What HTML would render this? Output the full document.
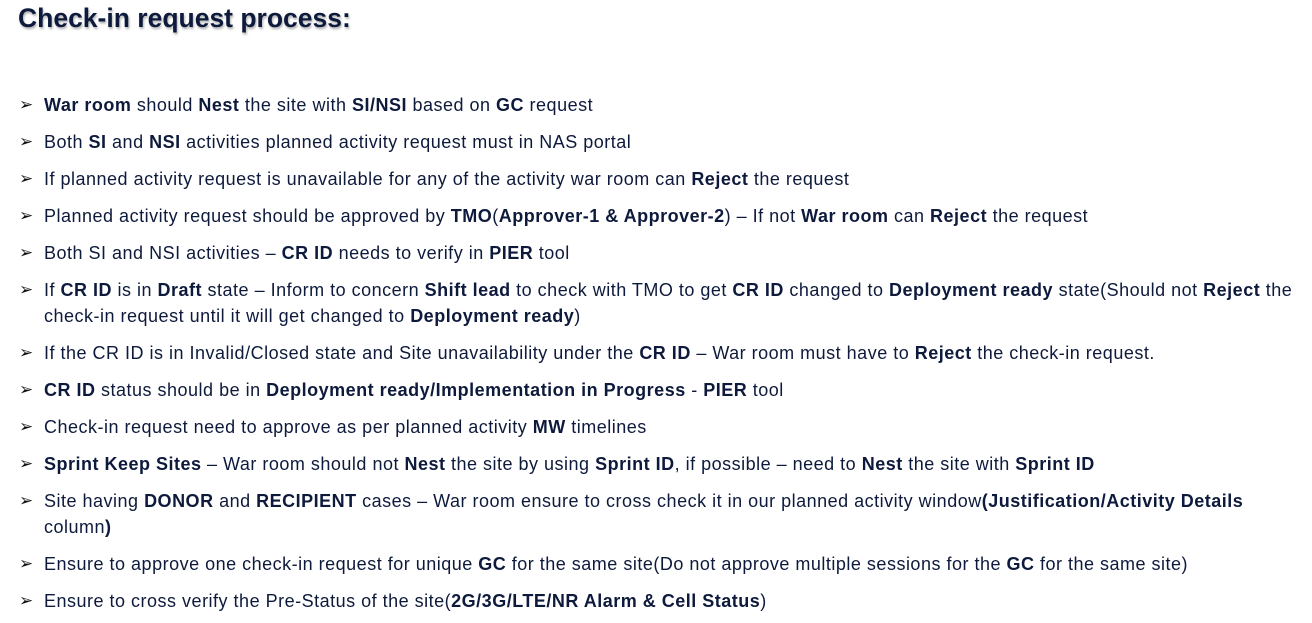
<!DOCTYPE html>
<html><head><meta charset="utf-8"><style>
html,body{margin:0;padding:0;background:#fff;width:1312px;height:623px;overflow:hidden}
body{font-family:"Liberation Sans",Arial,sans-serif;color:#0e1a3c;position:relative}
h1{position:absolute;left:18px;top:3px;margin:0;font-size:26.5px;font-weight:bold;color:#0e1a3c;text-shadow:1px 2px 2px rgba(0,0,0,0.3);letter-spacing:0px}
.r{position:absolute;left:44px;font-size:18px;letter-spacing:0.5px;white-space:nowrap;line-height:20px}
.a{position:absolute;left:19px;font-size:17px;line-height:20px;color:#111}
b{font-weight:bold}
</style></head><body>
<h1>Check-in request process:</h1>

<div class="a" style="top:95px">➢</div><div class="r" style="top:95px"><b>War room</b> should <b>Nest</b> the site with <b>SI/NSI</b> based on <b>GC</b> request</div>
<div class="a" style="top:132px">➢</div><div class="r" style="top:132px">Both <b>SI</b> and <b>NSI</b> activities planned activity request must in NAS portal</div>
<div class="a" style="top:169px">➢</div><div class="r" style="top:169px">If planned activity request is unavailable for any of the activity war room can <b>Reject</b> the request</div>
<div class="a" style="top:206px">➢</div><div class="r" style="top:206px">Planned activity request should be approved by <b>TMO</b>(<b>Approver-1 &amp; Approver-2</b>) – If not <b>War room</b> can <b>Reject</b> the request</div>
<div class="a" style="top:243px">➢</div><div class="r" style="top:243px">Both SI and NSI activities – <b>CR ID</b> needs to verify in <b>PIER</b> tool</div>
<div class="a" style="top:280px">➢</div><div class="r" style="top:280px">If <b>CR ID</b> is in <b>Draft</b> state – Inform to concern <b>Shift lead</b> to check with TMO to get <b>CR ID</b> changed to <b>Deployment ready</b> state(Should not <b>Reject</b> the</div>
<div class="r" style="top:306px">check-in request until it will get changed to <b>Deployment ready</b>)</div>
<div class="a" style="top:343px">➢</div><div class="r" style="top:343px">If the CR ID is in Invalid/Closed state and Site unavailability under the <b>CR ID</b> – War room must have to <b>Reject</b> the check-in request.</div>
<div class="a" style="top:380px">➢</div><div class="r" style="top:380px"><b>CR ID</b> status should be in <b>Deployment ready/Implementation in Progress</b> - <b>PIER</b> tool</div>
<div class="a" style="top:417px">➢</div><div class="r" style="top:417px">Check-in request need to approve as per planned activity <b>MW</b> timelines</div>
<div class="a" style="top:454px">➢</div><div class="r" style="top:454px"><b>Sprint Keep Sites</b> – War room should not <b>Nest</b> the site by using <b>Sprint ID</b>, if possible – need to <b>Nest</b> the site with <b>Sprint ID</b></div>
<div class="a" style="top:491px">➢</div><div class="r" style="top:491px">Site having <b>DONOR</b> and <b>RECIPIENT</b> cases – War room ensure to cross check it in our planned activity window<b>(Justification/Activity Details</b></div>
<div class="r" style="top:517px">column<b>)</b></div>
<div class="a" style="top:554px">➢</div><div class="r" style="top:554px">Ensure to approve one check-in request for unique <b>GC</b> for the same site(Do not approve multiple sessions for the <b>GC</b> for the same site)</div>
<div class="a" style="top:591px">➢</div><div class="r" style="top:591px">Ensure to cross verify the Pre-Status of the site(<b>2G/3G/LTE/NR Alarm &amp; Cell Status</b>)</div>
</body></html>
